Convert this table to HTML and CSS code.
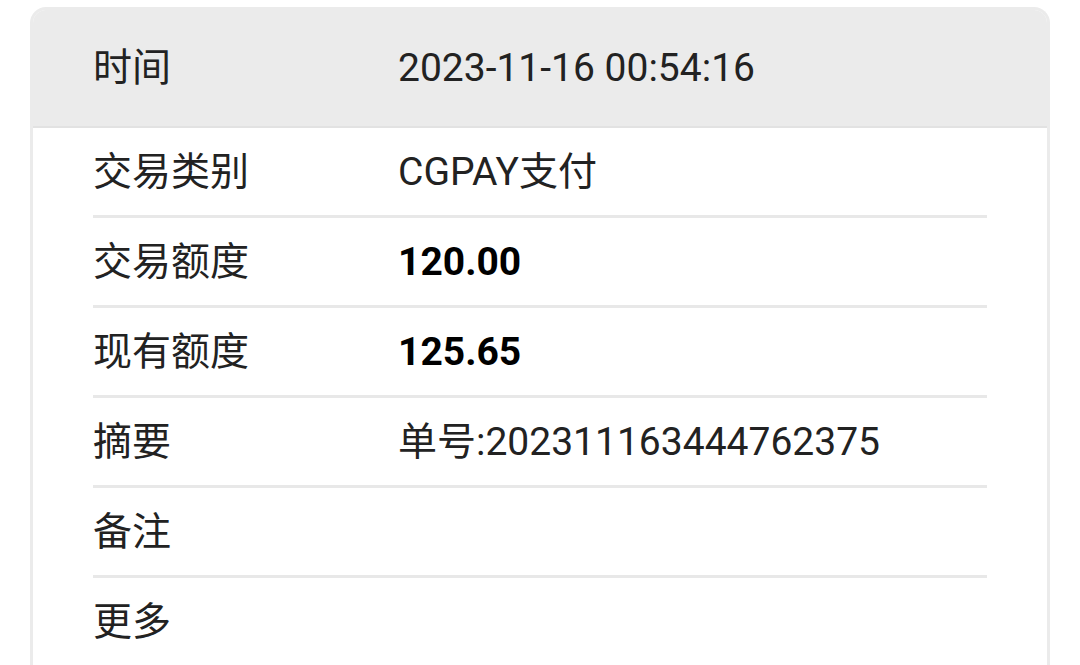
FILE: index.html
```html
<!DOCTYPE html>
<html lang="zh">
<head>
<meta charset="utf-8">
<link rel="stylesheet" href="styles.css">
</head>
<body>
<div class="card">
  <div class="head">
    <div class="label">时间</div>
    <div class="value">2023-11-16 00:54:16</div>
  </div>
  <div class="list">
    <div class="row"><div class="label">交易类别</div><div class="value">CGPAY支付</div></div>
    <div class="row"><div class="label">交易额度</div><div class="value strong">120.00</div></div>
    <div class="row"><div class="label">现有额度</div><div class="value strong">125.65</div></div>
    <div class="row"><div class="label">摘要</div><div class="value">单号:202311163444762375</div></div>
    <div class="row"><div class="label">备注</div><div class="value"></div></div>
    <div class="row"><div class="label">更多</div><div class="value"></div></div>
  </div>
</div>
</body>
</html>
```
FILE: styles.css
```css
html, body {
  margin: 0;
  padding: 0;
  background: #ffffff;
  height: 665px;
  overflow: hidden;
}
body {
  font-family: Roboto, "Noto Sans CJK SC", sans-serif;
  font-size: 39px;
  line-height: 46px;
  color: #222222;
  padding: 7px 30px 0 30px;
}
.card {
  width: 1020px;
  box-sizing: border-box;
  border: 3px solid #ebebeb;
  border-bottom: none;
  border-radius: 16px 16px 0 0;
  height: 700px;
  overflow: hidden;
  background: #fff;
}
.head {
  display: flex;
  align-items: center;
  height: 116px;
  padding: 0 60px;
  background: #ebebeb;
  border-bottom: 2px solid #e2e2e2;
  margin-top: -3px;
  padding-top: 3px;
}
.list {
  padding: 0 60px;
}
.row {
  display: flex;
  align-items: center;
  height: 87px;
  border-bottom: 3px solid #e8e8e8;
}
.label {
  width: 305px;
  flex: none;
}
.value {
  flex: 1;
}
.strong {
  font-weight: 700;
  color: #000;
}
```
